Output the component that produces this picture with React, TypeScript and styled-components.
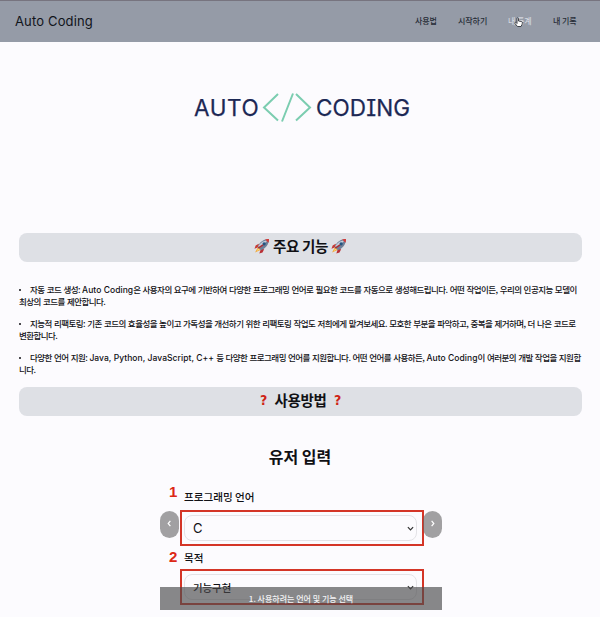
import React from "react";
import styled, { createGlobalStyle } from "styled-components";

const GlobalStyle = createGlobalStyle`
  * { box-sizing: border-box; }
  body {
    margin: 0;
    background: #fcfbfe;
    color: #101014;
    font-family: "Noto Sans CJK KR", sans-serif;
    overflow: hidden;
  }
`;

const Page = styled.div`
  height: 617px;
  display: flex;
  flex-direction: column;
  overflow: hidden;
`;

const Header = styled.header`
  height: 42px;
  flex: none;
  padding: 0 23px 2px 15px;
  display: flex;
  align-items: center;
  justify-content: space-between;
  background: #959ba7;
  border-top: 1px solid #77747f;
`;

const Brand = styled.div`
  font: 400 13px/18px Inter, sans-serif;
  letter-spacing: 0.15px;
  color: #11141b;
`;

const Nav = styled.nav`
  display: flex;
  gap: 21px;
`;

const NavItem = styled.a<{ $active?: boolean; $width: number }>`
  position: relative;
  width: ${(p) => p.$width}px;
  font-size: 8px;
  line-height: 14px;
  font-weight: 500;
  white-space: nowrap;
  letter-spacing: -0.05px;
  color: ${(p) => (p.$active ? "#d3d7df" : "#262b36")};
`;

const Pointer = styled.svg`
  position: absolute;
  left: 6px;
  top: 3px;
  width: 9px;
  height: 10px;
`;

const Hero = styled.div`
  height: 191px;
  flex: none;
  display: flex;
  justify-content: center;
  padding: 50px 0 0 3px;
`;

const Logo = styled.div`
  height: 32px;
  display: flex;
  align-items: center;
  color: #1c2855;
`;

const LogoWord = styled.span<{ $width: number; $spacing: number }>`
  width: ${(p) => p.$width}px;
  font: 400 22.5px/30px Inter, sans-serif;
  font-feature-settings: "cv08", "ss02";
  letter-spacing: ${(p) => p.$spacing}px;
  -webkit-text-stroke: 0.25px currentColor;
  white-space: nowrap;
`;

const LogoMark = styled.svg`
  width: 50px;
  height: 32px;
  margin: 0 4px;
`;

const Banner = styled.h2`
  height: 29px;
  flex: none;
  margin: 0 18px 0 19px;
  padding-bottom: 3px;
  display: flex;
  align-items: center;
  justify-content: center;
  gap: 3px;
  border-radius: 8px;
  background: #dee0e5;
  font-size: 14.5px;
  line-height: 20px;
  font-weight: 700;
  letter-spacing: -0.3px;
`;

const Question = styled.span`
  width: 16px;
  text-align: center;
  font: 700 14px/20px "DejaVu Sans Condensed", "DejaVu Sans", sans-serif;
  color: #cf2416;
`;

const Features = styled.ul`
  height: 125px;
  flex: none;
  margin: 0;
  padding: 22px 0 0 19px;
  list-style: none;
  display: flex;
  flex-direction: column;
  gap: 11px;
`;

const Feature = styled.li`
  font-size: 8.5px;
  line-height: 11.6px;
  white-space: nowrap;
`;

const Line = styled.div`
  height: 11.6px;
  font-weight: 500;
  letter-spacing: -0.55px;
  word-spacing: 0.8px;
`;

const Term = styled.span`
  font-family: Inter, sans-serif;
  font-weight: 500;
  letter-spacing: 0.05px;
  word-spacing: 0;
`;

const Dot = styled.i`
  display: inline-block;
  vertical-align: 2px;
  width: 2px;
  height: 2px;
  margin-right: 9px;
  border-radius: 50%;
  background: #101014;
`;

const Title = styled.h3`
  margin: 28px 0 0;
  text-align: center;
  font-size: 16px;
  line-height: 24px;
  font-weight: 700;
`;

const Carousel = styled.section`
  position: relative;
  width: 282px;
  height: 132px;
  margin: 12px 0 0 160px;
  display: flex;
  flex-direction: column;
`;

const Label = styled.div<{ $height: number; $drop: number }>`
  height: ${(p) => p.$height}px;
  padding-top: ${(p) => p.$drop}px;
  display: flex;
  align-items: center;
  font-size: 10.6px;
  line-height: 15px;
  font-weight: 500;
`;

const Step = styled.span<{ $lift: number }>`
  width: 24px;
  padding-left: 9px;
  padding-bottom: ${(p) => p.$lift}px;
  font: 700 15px/16px "Liberation Sans", sans-serif;
  color: #dc2816;
`;

const Frame = styled.div`
  width: 244px;
  height: 36px;
  margin-left: 20px;
  padding: 3px 5px 3px 2px;
  border: 2px solid #d43527;
`;

const Select = styled.div`
  height: 26px;
  display: flex;
  align-items: center;
  justify-content: space-between;
  padding: 0 2px 0 8px;
  border: 1px solid #e4e3e7;
  border-radius: 8px;
  font-size: 10.4px;
  font-weight: 500;
`;

const Latin = styled.span`
  font: 400 13px/18px Inter, sans-serif;
`;

const Arrow = styled.button<{ $side: "left" | "right" }>`
  position: absolute;
  top: 31px;
  ${(p) => p.$side}: 0;
  width: 19px;
  height: 27px;
  padding: 0 0 2px;
  display: flex;
  align-items: center;
  justify-content: center;
  border: 0;
  border-radius: 9.5px;
  background: rgba(100, 100, 100, 0.6);
`;

const Caption = styled.div`
  position: absolute;
  left: 0;
  right: 0;
  bottom: 2px;
  height: 23px;
  display: flex;
  align-items: center;
  justify-content: center;
  padding-bottom: 1px;
  background: rgba(75, 74, 76, 0.66);
  color: #f4f3f5;
  font-size: 8px;
  font-weight: 500;
`;

const Chevron = ({ d, color, size = 7 }: { d: string; color: string; size?: number }) => (
  <svg width={size} height={size} viewBox="0 0 8 8" fill="none" stroke={color} strokeWidth="1.4">
    <path d={d} />
  </svg>
);

const Rocket = () => (
  <svg width="16" height="16" viewBox="0 0 30 30">
    <path d="M9 11 3 14 1 20 9 17Z" fill="#c63b35" />
    <path d="m19 21-3 6-6 2 3-9Z" fill="#b92f35" />
    <path d="M7 18 2 27l9-4 3-3-4-4Z" fill="#f3a63a" />
    <path d="m8 19-3 6 6-4Z" fill="#ffdd70" />
    <path d="M7 17C10 8 18 2 28 2c0 10-6 18-15 21Z" fill="#6f8098" />
    <path d="M8 15C12 8 19 4 26 4L10 19Z" fill="#c3cedb" />
    <path d="M21 3c3-1 5-1 7-1 0 3 0 5-1 7Z" fill="#d43a38" />
    <circle cx="19" cy="11" r="3" fill="#245581" />
    <path d="m8 19 9-6" stroke="#a72f37" strokeWidth="3" />
  </svg>
);

export default function App() {
  return (
    <>
      <GlobalStyle />
      <Page>
        <Header>
          <Brand>Auto Coding</Brand>
          <Nav>
            <NavItem $width={22}>사용법</NavItem>
            <NavItem $width={29}>시작하기</NavItem>
            <NavItem $width={24} $active>
              내 통계
              <Pointer viewBox="0 0 18 20">
                <path
                  d="M6 10V3c0-2 3-2 3 0v5l6 1c2 1 2 3 1 6l-2 4H7L2 13c-1-2 1-3 2-2l2 2Z"
                  fill="#fff"
                  stroke="#30333a"
                  strokeWidth="1.8"
                />
              </Pointer>
            </NavItem>
            <NavItem $width={24}>내 기록</NavItem>
          </Nav>
        </Header>
        <Hero>
          <Logo>
            <LogoWord $width={64} $spacing={0.6}>AUTO</LogoWord>
            <LogoMark viewBox="0 0 50 32" fill="none" stroke="#7bcdb0" strokeWidth="2">
              <path d="M16 2 2 15.5l14 13M31 1.5 20 29.5M34 2l14 13.5-14 13" />
            </LogoMark>
            <LogoWord $width={93} $spacing={0.1}>CODING</LogoWord>
          </Logo>
        </Hero>
        <Banner>
          <Rocket />
          <span>주요 기능</span>
          <Rocket />
        </Banner>
        <Features>
          <Feature>
            <Line><Dot />자동 코드 생성: <Term>Auto Coding</Term>은 사용자의 요구에 기반하여 다양한 프로그래밍 언어로 필요한 코드를 자동으로 생성해드립니다. 어떤 작업이든, 우리의 인공지능 모델이</Line>
            <Line>최상의 코드를 제안합니다.</Line>
          </Feature>
          <Feature>
            <Line><Dot />지능적 리팩토링: 기존 코드의 효율성을 높이고 가독성을 개선하기 위한 리팩토링 작업도 저희에게 맡겨보세요. 모호한 부분을 파악하고, 중복을 제거하며, 더 나은 코드로</Line>
            <Line>변환합니다.</Line>
          </Feature>
          <Feature>
            <Line><Dot />다양한 언어 지원: <Term>Java, Python, JavaScript, C++</Term> 등 다양한 프로그래밍 언어를 지원합니다. 어떤 언어를 사용하든, <Term>Auto Coding</Term>이 여러분의 개발 작업을 지원합</Line>
            <Line>니다.</Line>
          </Feature>
        </Features>
        <Banner>
          <Question>?</Question>
          <span>사용방법</span>
          <Question>?</Question>
        </Banner>
        <Title>유저 입력</Title>
        <Carousel>
          <Label $height={30} $drop={3}><Step $lift={9}>1</Step>프로그래밍 언어</Label>
          <Frame>
            <Select><Latin>C</Latin><Chevron d="M1 2.5 4 5.5 7 2.5" color="#333" /></Select>
          </Frame>
          <Label $height={23} $drop={0}><Step $lift={2}>2</Step>목적</Label>
          <Frame>
            <Select>기능구현<Chevron d="M1 2.5 4 5.5 7 2.5" color="#333" /></Select>
          </Frame>
          <Arrow $side="left"><Chevron d="M5 1 2.5 4 5 7" color="#fff" /></Arrow>
          <Arrow $side="right"><Chevron d="M3 1 5.5 4 3 7" color="#fff" /></Arrow>
          <Caption>1. 사용하려는 언어 및 기능 선택</Caption>
        </Carousel>
      </Page>
    </>
  );
}
